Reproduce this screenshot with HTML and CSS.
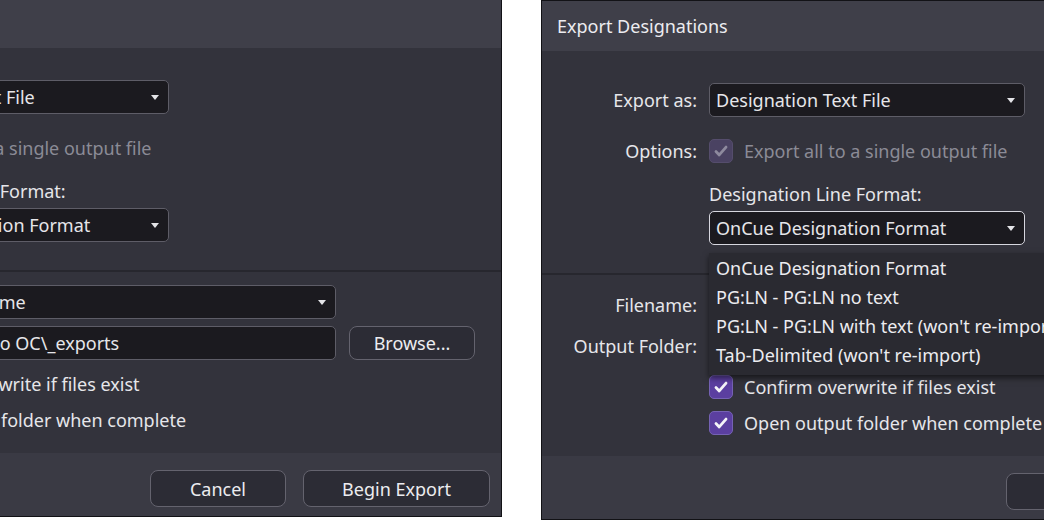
FILE: index.html
```html
<!DOCTYPE html>
<html lang="en">
<head>
<meta charset="utf-8">
<title>Export Designations</title>
<link rel="stylesheet" href="styles.css">
</head>
<body>
<div class="desk">

  <section class="dialog dialog-back">
    <header class="titlebar">Export Designations</header>
    <div class="content">
      <div class="upper">
        <div class="row r-export">
          <span class="label">Export as:</span>
          <div class="select w-short"><span>Designation Text File</span><i class="caret"></i></div>
        </div>
        <div class="row r-options">
          <span class="label">Options:</span>
          <div class="check disabled">
            <span class="box"><svg viewBox="0 0 24 24" width="24" height="24"><path d="M6.5 12.5l3.6 3.8 7.4-8.6" /></svg></span>
            <span>Export all to a single output file</span>
          </div>
        </div>
        <div class="row r-fmtlabel">
          <span class="label"></span>
          <span class="sub">Designation Line Format:</span>
        </div>
        <div class="row r-fmt">
          <span class="label"></span>
          <div class="select w-short"><span>OnCue Designation Format</span><i class="caret"></i></div>
        </div>
      </div>
      <div class="lower">
        <div class="row r-filename">
          <span class="label">Filename:</span>
          <div class="select w-long"><span>Use Case File Name</span><i class="caret"></i></div>
        </div>
        <div class="row r-folder">
          <span class="label">Output Folder:</span>
          <div class="input w-long"><span>C:\Desktop\Demo OC\_exports</span></div>
          <button class="btn browse">Browse...</button>
        </div>
        <div class="row r-check">
          <span class="label"></span>
          <div class="check">
            <span class="box"><svg viewBox="0 0 24 24" width="24" height="24"><path d="M6.5 12.5l3.6 3.8 7.4-8.6" /></svg></span>
            <span>Confirm overwrite if files exist</span>
          </div>
        </div>
        <div class="row r-check">
          <span class="label"></span>
          <div class="check">
            <span class="box"><svg viewBox="0 0 24 24" width="24" height="24"><path d="M6.5 12.5l3.6 3.8 7.4-8.6" /></svg></span>
            <span>Open output folder when complete</span>
          </div>
        </div>
      </div>
    </div>
    <footer class="footer">
      <button class="btn cancel">Cancel</button>
      <button class="btn begin">Begin Export</button>
    </footer>
  </section>

  <section class="dialog dialog-front">
    <header class="titlebar">Export Designations</header>
    <div class="content">
      <div class="upper">
        <div class="row r-export">
          <span class="label">Export as:</span>
          <div class="select w-short"><span>Designation Text File</span><i class="caret"></i></div>
        </div>
        <div class="row r-options">
          <span class="label">Options:</span>
          <div class="check disabled">
            <span class="box"><svg viewBox="0 0 24 24" width="24" height="24"><path d="M6.5 12.5l3.6 3.8 7.4-8.6" /></svg></span>
            <span>Export all to a single output file</span>
          </div>
        </div>
        <div class="row r-fmtlabel">
          <span class="label"></span>
          <span class="sub">Designation Line Format:</span>
        </div>
        <div class="row r-fmt">
          <span class="label"></span>
          <div class="select w-short focused"><span>OnCue Designation Format</span><i class="caret"></i></div>
        </div>
      </div>
      <div class="lower">
        <div class="row r-filename">
          <span class="label">Filename:</span>
          <div class="select w-long covered"><i class="caret"></i></div>
        </div>
        <div class="row r-folder">
          <span class="label">Output Folder:</span>
          <div class="input w-long covered"></div>
          <button class="btn browse">Browse...</button>
        </div>
        <div class="row r-check">
          <span class="label"></span>
          <div class="check">
            <span class="box"><svg viewBox="0 0 24 24" width="24" height="24"><path d="M6.5 12.5l3.6 3.8 7.4-8.6" /></svg></span>
            <span>Confirm overwrite if files exist</span>
          </div>
        </div>
        <div class="row r-check">
          <span class="label"></span>
          <div class="check">
            <span class="box"><svg viewBox="0 0 24 24" width="24" height="24"><path d="M6.5 12.5l3.6 3.8 7.4-8.6" /></svg></span>
            <span>Open output folder when complete</span>
          </div>
        </div>
      </div>
    </div>
    <footer class="footer">
      <button class="btn cancel">Cancel</button>
      <button class="btn begin">Begin Export</button>
    </footer>
    <ul class="popup">
      <li>OnCue Designation Format</li>
      <li>PG:LN - PG:LN no text</li>
      <li>PG:LN - PG:LN with text (won't re-import)</li>
      <li>Tab-Delimited (won't re-import)</li>
    </ul>
  </section>

</div>
</body>
</html>
```

FILE: styles.css
```css
html, body {
  margin: 0;
  padding: 0;
  background: #ffffff;
  overflow: hidden;
}

.desk {
  position: relative;
  width: 1044px;
  height: 522px;
  overflow: hidden;
  font-family: "Noto Sans", "DejaVu Sans", sans-serif;
  font-size: 18px;
  color: #e6e6ea;
}

.dialog {
  position: absolute;
  width: 817px;
  height: 520px;
  box-sizing: border-box;
  border: 1px solid #121216;
  background: #33333c;
  display: flex;
  flex-direction: column;
}

.dialog-back { left: -315px; top: -3px; }
.dialog-front { left: 541px; top: 0; }

.titlebar {
  height: 50px;
  flex: none;
  background: #3f3f49;
  display: flex;
  align-items: center;
  padding-left: 15px;
  font-size: 18px;
  color: #ececf0;
}

.content {
  flex: 1;
  display: flex;
  flex-direction: column;
  padding-top: 32px;
}

.upper {
  padding-bottom: 28px;
  border-bottom: 2px solid #27272e;
}

.lower {
  flex: 1;
}

.row {
  display: flex;
  align-items: center;
  gap: 12px;
}

.label {
  width: 155px;
  flex: none;
  text-align: right;
  line-height: 24px;
  white-space: nowrap;
}

.r-options { margin-top: 22px; }
.r-fmtlabel { margin-top: 19px; line-height: 24px; }
.r-fmt { margin-top: 5px; }
.r-filename { margin-top: 13px; }
.r-folder { margin-top: 7px; gap: 12px; }
.r-check { margin-top: 12px; }

.select, .input {
  position: relative;
  height: 34px;
  box-sizing: border-box;
  background: #1b1a1f;
  border: 1.5px solid #5e5d67;
  border-radius: 5px;
  display: flex;
  align-items: center;
  padding-left: 6px;
  white-space: nowrap;
  overflow: hidden;
}

.select.focused { border-color: #d6d6de; }

.w-short { width: 316px; }
.w-long { width: 483px; }

.caret {
  position: absolute;
  right: 9px;
  top: 50%;
  margin-top: -2px;
  width: 0;
  height: 0;
  border-left: 4.5px solid transparent;
  border-right: 4.5px solid transparent;
  border-top: 5px solid #e4e4e8;
}

.check {
  display: flex;
  align-items: center;
  gap: 11px;
  white-space: nowrap;
}

.box {
  width: 24px;
  height: 24px;
  box-sizing: border-box;
  border-radius: 5px;
  background: #5b3fa0;
  border: 1.5px solid #7562b4;
  display: flex;
  align-items: center;
  justify-content: center;
  flex: none;
}

.box svg {
  width: 22px;
  height: 22px;
  fill: none;
  stroke: #f4f4f8;
  stroke-width: 3;
  stroke-linecap: round;
  stroke-linejoin: round;
}

.check.disabled { color: #8b8b96; }
.check.disabled .box { background: #4a4262; border-color: #554d6c; }
.check.disabled .box svg { stroke: #8e8a9e; }

.btn {
  font-family: inherit;
  font-size: 18px;
  color: #ececf0;
  background: #2c2c35;
  border: 1.5px solid #64636e;
  border-radius: 8px;
  box-sizing: border-box;
  padding: 0;
  margin: 0;
}

.browse {
  width: 126px;
  height: 34px;
  margin-left: 1px;
}

.footer {
  height: 63px;
  flex: none;
  background: #3a3a44;
  display: flex;
  justify-content: flex-end;
  align-items: flex-start;
  gap: 17px;
  padding: 17px 11px 0 0;
  box-sizing: border-box;
}

.footer .btn { height: 37px; }
.cancel { width: 136px; }
.begin { width: 187px; }

.popup {
  position: absolute;
  left: 167px;
  top: 252px;
  width: 380px;
  margin: 0;
  padding: 1px 0 5px 0;
  list-style: none;
  background: #2a2a31;
  box-shadow: 0 3px 6px rgba(0, 0, 0, 0.55);
}

.popup li {
  height: 29px;
  line-height: 29px;
  padding-left: 7px;
  white-space: nowrap;
  color: #ececf0;
}
```
